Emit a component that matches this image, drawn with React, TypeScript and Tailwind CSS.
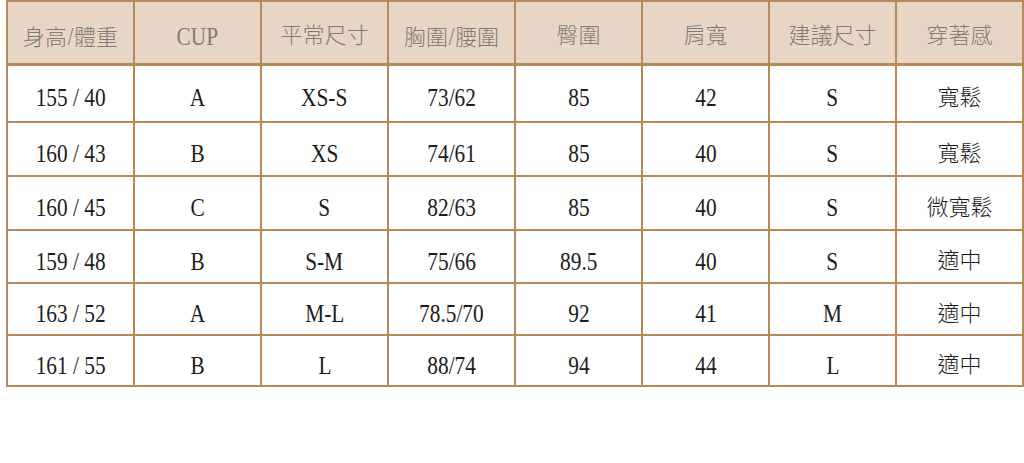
import React from "react";

const headers = ["身高/體重", "CUP", "平常尺寸", "胸圍/腰圍", "臀圍", "肩寬", "建議尺寸", "穿著感"];
const rows = [
  ["155 / 40", "A", "XS-S", "73/62", "85", "42", "S", "寬鬆"],
  ["160 / 43", "B", "XS", "74/61", "85", "40", "S", "寬鬆"],
  ["160 / 45", "C", "S", "82/63", "85", "40", "S", "微寬鬆"],
  ["159 / 48", "B", "S-M", "75/66", "89.5", "40", "S", "適中"],
  ["163 / 52", "A", "M-L", "78.5/70", "92", "41", "M", "適中"],
  ["161 / 55", "B", "L", "88/74", "94", "44", "L", "適中"],
];
const rowH = ["h-[58px]", "h-[54px]", "h-[54px]", "h-[53px]", "h-[52px]", "h-[51px]"];

const isCJK = (s: string) => /[\u3400-\u9fff]/.test(s);

function Cell({ text, header }: { text: string; header?: boolean }) {
  const cjk = isCJK(text);
  const color = header ? "text-[#7e7b78]" : "text-[#1c1c1c]";
  if (cjk) {
    return (
      <span className={`text-[22px] font-light leading-none ${color}`}>
        {text.split(/(\/)/).map((part, i) =>
          part === "/" ? (
            <span key={i} className="inline-block scale-x-[0.8] text-[25px] [font-family:'Liberation_Serif',serif]">/</span>
          ) : (
            <span key={i}>{part}</span>
          )
        )}
      </span>
    );
  }
  return (
    <span className={`inline-block scale-x-[0.82] text-[26px] leading-none [font-family:'Liberation_Serif',serif] ${color}`}>
      {text}
    </span>
  );
}

export default function App() {
  return (
    <div className="w-[1024px] h-[463px] bg-white pl-[6px] pt-0 [font-family:'Liberation_Serif','Noto_Sans_CJK_TC',serif]">
      <table className="border-collapse table-fixed w-[1016px]">
        <colgroup>
          <col className="w-[127px]" />
          <col className="w-[127px]" />
          <col className="w-[127px]" />
          <col className="w-[127px]" />
          <col className="w-[127px]" />
          <col className="w-[127px]" />
          <col className="w-[127px]" />
          <col className="w-[127px]" />
        </colgroup>
        <thead>
          <tr className="h-[63px] bg-[#e7d6c6]">
            {headers.map((h) => (
              <th
                key={h}
                className="border-2 border-[#b8895c] border-b-[3px] font-normal text-center align-middle pt-[11px]"
              >
                <Cell text={h} header />
              </th>
            ))}
          </tr>
        </thead>
        <tbody>
          {rows.map((r, ri) => (
            <tr key={ri} className={rowH[ri]}>
              {r.map((c, ci) => (
                <td key={ci} className="border-2 border-[#b8895c] text-center align-middle pt-[12px]">
                  <Cell text={c} />
                </td>
              ))}
            </tr>
          ))}
        </tbody>
      </table>
    </div>
  );
}
